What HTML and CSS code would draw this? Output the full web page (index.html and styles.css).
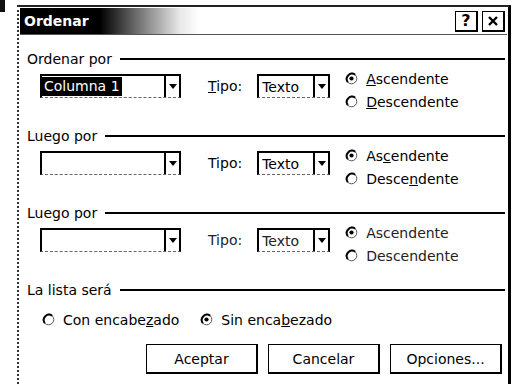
FILE: index.html
```html
<!DOCTYPE html>
<html>
<head>
    <title>Ordenar</title>
    <link rel="stylesheet" href="styles.css">
</head>
<body>
    <div class="page">
        <div class="scan-mark"></div>

        <div class="dialog">
            <div class="titlebar">
                <span class="title">Ordenar</span>
                <div class="caption-btns">
                    <span class="cbtn">?</span>
                    <span class="cbtn">
                        <svg width="10" height="10" viewBox="0 0 10 10"><path d="M1 1L9 9M9 1L1 9" stroke="#000" stroke-width="2.4"/></svg>
                    </span>
                </div>
            </div>

            <div class="content">
                <div class="group">
                    <div class="group-head"><span>Ordenar por</span></div>
                    <div class="sort-row">
                        <div class="combo key">
                            <span class="value sel">Columna 1</span>
                            <span class="drop"><svg width="8" height="5" viewBox="0 0 8 5"><path d="M0 0h8L4 5z"/></svg></span>
                        </div>
                        <span class="field-label"><u>T</u>ipo:</span>
                        <div class="combo type">
                            <span class="value">Texto</span>
                            <span class="drop"><svg width="8" height="5" viewBox="0 0 8 5"><path d="M0 0h8L4 5z"/></svg></span>
                        </div>
                        <div class="radios">
                            <label class="radio">
                                <svg width="13" height="13" viewBox="0 0 13 13"><circle cx="6.5" cy="6.5" r="5.3" fill="none" stroke="#555" stroke-width="1"/><path d="M2.8 10.2A5.3 5.3 0 0 1 10.2 2.8" fill="none" stroke="#000" stroke-width="1.9"/><circle cx="6.5" cy="6.5" r="2.1" fill="#000"/></svg>
                                <span><u>A</u>scendente</span>
                            </label>
                            <label class="radio">
                                <svg width="13" height="13" viewBox="0 0 13 13"><circle cx="6.5" cy="6.5" r="5.3" fill="none" stroke="#555" stroke-width="1"/><path d="M2.8 10.2A5.3 5.3 0 0 1 10.2 2.8" fill="none" stroke="#000" stroke-width="1.9"/></svg>
                                <span><u>D</u>escendente</span>
                            </label>
                        </div>
                    </div>
                </div>

                <div class="group">
                    <div class="group-head"><span>Luego por</span></div>
                    <div class="sort-row">
                        <div class="combo key">
                            <span class="value"></span>
                            <span class="drop"><svg width="8" height="5" viewBox="0 0 8 5"><path d="M0 0h8L4 5z"/></svg></span>
                        </div>
                        <span class="field-label">Tipo:</span>
                        <div class="combo type">
                            <span class="value">Texto</span>
                            <span class="drop"><svg width="8" height="5" viewBox="0 0 8 5"><path d="M0 0h8L4 5z"/></svg></span>
                        </div>
                        <div class="radios">
                            <label class="radio">
                                <svg width="13" height="13" viewBox="0 0 13 13"><circle cx="6.5" cy="6.5" r="5.3" fill="none" stroke="#555" stroke-width="1"/><path d="M2.8 10.2A5.3 5.3 0 0 1 10.2 2.8" fill="none" stroke="#000" stroke-width="1.9"/><circle cx="6.5" cy="6.5" r="2.1" fill="#000"/></svg>
                                <span>As<u>c</u>endente</span>
                            </label>
                            <label class="radio">
                                <svg width="13" height="13" viewBox="0 0 13 13"><circle cx="6.5" cy="6.5" r="5.3" fill="none" stroke="#555" stroke-width="1"/><path d="M2.8 10.2A5.3 5.3 0 0 1 10.2 2.8" fill="none" stroke="#000" stroke-width="1.9"/></svg>
                                <span>Desce<u>n</u>dente</span>
                            </label>
                        </div>
                    </div>
                </div>

                <div class="group">
                    <div class="group-head"><span>Luego por</span></div>
                    <div class="sort-row faded">
                        <div class="combo key">
                            <span class="value"></span>
                            <span class="drop"><svg width="8" height="5" viewBox="0 0 8 5"><path d="M0 0h8L4 5z"/></svg></span>
                        </div>
                        <span class="field-label">Tipo:</span>
                        <div class="combo type">
                            <span class="value">Texto</span>
                            <span class="drop"><svg width="8" height="5" viewBox="0 0 8 5"><path d="M0 0h8L4 5z"/></svg></span>
                        </div>
                        <div class="radios">
                            <label class="radio">
                                <svg width="13" height="13" viewBox="0 0 13 13"><circle cx="6.5" cy="6.5" r="5.3" fill="none" stroke="#555" stroke-width="1"/><path d="M2.8 10.2A5.3 5.3 0 0 1 10.2 2.8" fill="none" stroke="#000" stroke-width="1.9"/><circle cx="6.5" cy="6.5" r="2.1" fill="#000"/></svg>
                                <span>Ascendente</span>
                            </label>
                            <label class="radio">
                                <svg width="13" height="13" viewBox="0 0 13 13"><circle cx="6.5" cy="6.5" r="5.3" fill="none" stroke="#555" stroke-width="1"/><path d="M2.8 10.2A5.3 5.3 0 0 1 10.2 2.8" fill="none" stroke="#000" stroke-width="1.9"/></svg>
                                <span>Descendente</span>
                            </label>
                        </div>
                    </div>
                </div>

                <div class="group last">
                    <div class="group-head"><span>La lista será</span></div>
                    <div class="header-row">
                        <label class="radio">
                            <svg width="13" height="13" viewBox="0 0 13 13"><circle cx="6.5" cy="6.5" r="5.3" fill="none" stroke="#555" stroke-width="1"/><path d="M2.8 10.2A5.3 5.3 0 0 1 10.2 2.8" fill="none" stroke="#000" stroke-width="1.9"/></svg>
                            <span>Con encabe<u>z</u>ado</span>
                        </label>
                        <label class="radio">
                            <svg width="13" height="13" viewBox="0 0 13 13"><circle cx="6.5" cy="6.5" r="5.3" fill="none" stroke="#555" stroke-width="1"/><path d="M2.8 10.2A5.3 5.3 0 0 1 10.2 2.8" fill="none" stroke="#000" stroke-width="1.9"/><circle cx="6.5" cy="6.5" r="2.1" fill="#000"/></svg>
                            <span>Sin enca<u>b</u>ezado</span>
                        </label>
                    </div>
                </div>

                <div class="actions">
                    <button class="btn">Aceptar</button>
                    <button class="btn">Cancelar</button>
                    <button class="btn">Opciones...</button>
                </div>
            </div>
        </div>
    </div>
</body>
</html>
```

FILE: styles.css
```css
* {
    box-sizing: border-box;
}

body {
    margin: 0;
    height: 384px;
    overflow: hidden;
    background: #fff;
    color: #000;
    font-family: "DejaVu Sans", Verdana, sans-serif;
    font-size: 14px;
}

.page {
    display: flex;
    align-items: flex-start;
}

.scan-mark {
    width: 5px;
    height: 12px;
    background: #111;
}

.dialog {
    margin-left: 12px;
    margin-top: 5px;
    width: 494px;
    height: 379px;
    overflow: hidden;
    border-top: 2px solid #222;
    border-left: 2px dotted #333;
    border-right: 3px solid #000;
    padding: 1px 0 0 1px;
}

.titlebar {
    height: 27px;
    margin-right: 1px;
    padding: 0 2px 0 4px;
    display: flex;
    align-items: center;
    justify-content: space-between;
    background: linear-gradient(to right, #000 0, #000 80px, #777 120px, #e8e8e8 160px, #fff 180px);
    border-bottom: 1px solid #555;
}

.title {
    color: #fff;
    font-weight: bold;
    font-size: 14px;
}

.caption-btns {
    display: flex;
    gap: 4px;
}

.cbtn {
    width: 23px;
    height: 21px;
    display: flex;
    align-items: center;
    justify-content: center;
    background: #fff;
    border: solid #000;
    border-width: 1px 2px 2px 1px;
    font-weight: bold;
    font-size: 16px;
}

.content {
    padding: 16px 3px 0 7px;
}

.group {
    margin-bottom: 15px;
}

.group.last {
    margin-bottom: 0;
}

.group-head {
    height: 16px;
    display: flex;
    align-items: center;
    gap: 8px;
}

.group-head::after {
    content: "";
    flex: 1;
    border-top: 2px solid #000;
}

.sort-row {
    display: flex;
    align-items: flex-start;
}

.sort-row.faded {
    color: #222;
}

.combo {
    margin-top: 7px;
    height: 24px;
    display: flex;
    align-items: center;
    border: 2px solid #000;
    border-bottom: 1px dashed #666;
    background: #fff;
}

.combo.key {
    width: 141px;
    margin-left: 13px;
}

.combo.type {
    width: 73px;
    margin-left: 15px;
}

.value {
    flex: 1;
    padding-left: 3px;
    white-space: nowrap;
}

.value.sel {
    flex: none;
    margin-right: auto;
    padding: 1px 2px;
    line-height: 17px;
    background: #000;
    color: #fff;
}

.drop {
    width: 15px;
    align-self: stretch;
    display: flex;
    align-items: center;
    justify-content: center;
    border-left: 2px solid #000;
}

.field-label {
    margin-top: 7px;
    margin-left: 27px;
    line-height: 24px;
}

.radios {
    margin-left: 15px;
    display: flex;
    flex-direction: column;
}

.radio {
    height: 23px;
    display: flex;
    align-items: center;
    gap: 8px;
}

.header-row {
    margin-top: 10px;
    margin-left: 15px;
    display: flex;
    gap: 21px;
}

.actions {
    margin-top: 13px;
    display: flex;
    justify-content: flex-end;
    gap: 10px;
    padding-right: 3px;
}

.btn {
    width: 112px;
    height: 30px;
    background: #fff;
    color: #000;
    font-family: "DejaVu Sans", Verdana, sans-serif;
    font-size: 14px;
    border: solid #000;
    border-width: 1px 2px 2px 1px;
    padding: 0;
}
```
